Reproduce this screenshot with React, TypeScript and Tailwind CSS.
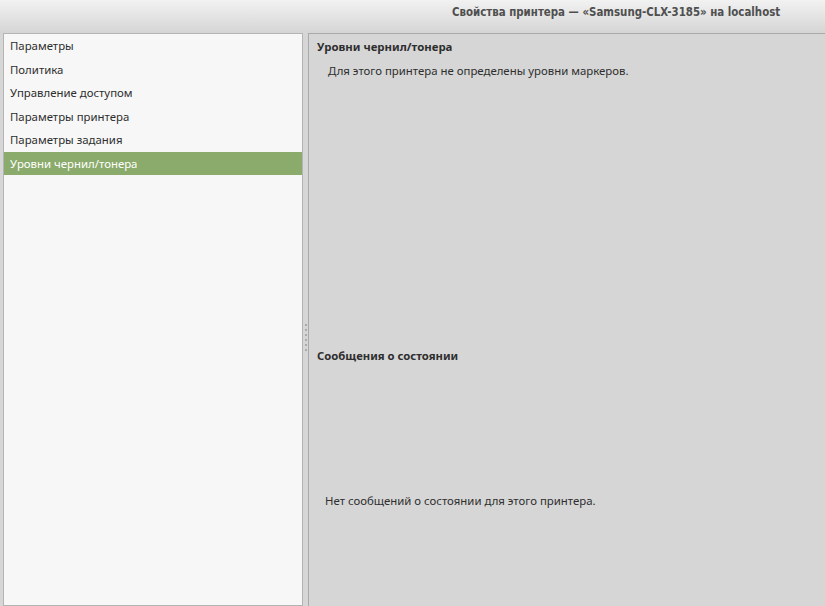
import React from "react";

const sections = [
  "Параметры",
  "Политика",
  "Управление доступом",
  "Параметры принтера",
  "Параметры задания",
  "Уровни чернил/тонера",
];

function TitleBar() {
  return (
    <div className="relative h-[33px] bg-gradient-to-b from-[#f2f2f2] to-[#d5d5d5]">
      <span className="absolute left-[452px] top-[4px] font-['DejaVu_Sans_Condensed','DejaVu_Sans',sans-serif] text-[11.4px] font-bold text-[#4f4f4f]">
        Свойства принтера — «Samsung-CLX-3185» на localhost
      </span>
    </div>
  );
}

function Sidebar({ active }: { active: number }) {
  return (
    <div className="ml-[3px] w-[300px] border border-[#b4b4b4] bg-[#f7f7f7]">
      {sections.map((s, i) => (
        <div
          key={s}
          className={
            i === active
              ? "h-[23.5px] bg-[#8bab6c] pl-[6px] leading-[23.5px] text-white"
              : "h-[23.5px] pl-[6px] leading-[23.5px] text-[#2e2e2e]"
          }
        >
          {s}
        </div>
      ))}
    </div>
  );
}

// pane handle grip
function Splitter() {
  return (
    <div className="flex w-[5px] flex-col items-center gap-[3px] pt-[291px]">
      {[0, 1, 2, 3, 4, 5].map((i) => (
        <span key={i} className="h-[2px] w-[2px] bg-[#ababab]" />
      ))}
    </div>
  );
}

function InkLevels() {
  return (
    <div className="flex flex-1 flex-col border-l border-t border-[#a9a9a9] bg-[#d6d6d6] pl-[8px] text-[#2e2e2e]">
      <div className="mt-[1px] text-[11.4px] font-bold leading-[24px]">Уровни чернил/тонера</div>
      <div className="ml-[11px] leading-[24px]">
        Для этого принтера не определены уровни маркеров.
      </div>
      <div className="mt-[261px] text-[11.3px] font-bold leading-[24px]">Сообщения о состоянии</div>
      <div className="ml-[8px] mt-[121px] leading-[24px]">
        Нет сообщений о состоянии для этого принтера.
      </div>
    </div>
  );
}

export default function App() {
  return (
    <div className="flex h-[606px] w-[825px] flex-col overflow-hidden bg-[#d6d6d6] font-['Noto_Sans','Open_Sans',sans-serif] text-[11.4px]">
      <TitleBar />
      <div className="flex flex-1">
        <Sidebar active={5} />
        <Splitter />
        <InkLevels />
      </div>
    </div>
  );
}
